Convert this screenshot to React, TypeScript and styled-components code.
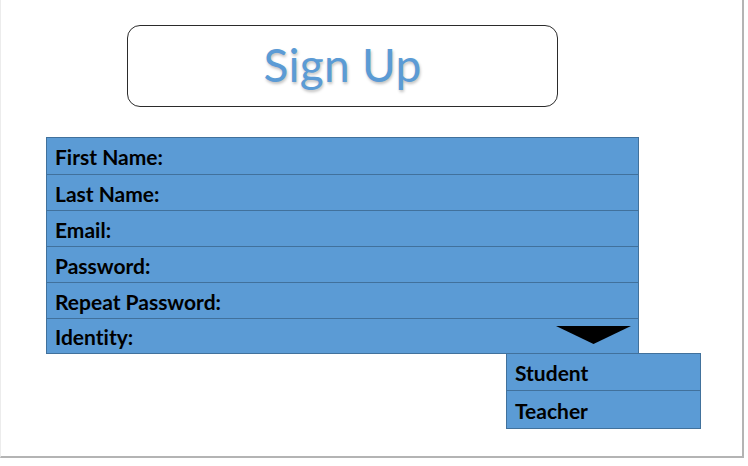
import React from "react";
import styled, { createGlobalStyle } from "styled-components";

const Global = createGlobalStyle`
  html, body { margin: 0; padding: 0; background: #ffffff; }
  body { font-family: Lato, "Open Sans", sans-serif; font-variant-ligatures: none; }
`;

const Canvas = styled.div`
  box-sizing: border-box;
  width: 744px;
  height: 458px;
  border-right: 2px solid #b4b4b4;
  border-bottom: 2px solid #b4b4b4;
  border-left: 1px solid #ececec;
  display: flex;
  flex-direction: column;
  align-items: flex-start;
  padding-top: 25px;
`;

const TitleBox = styled.div`
  box-sizing: border-box;
  margin-left: 126px;
  width: 431px;
  height: 82px;
  border: 1px solid #2b2b2b;
  border-radius: 13px;
  display: flex;
  align-items: center;
  justify-content: center;
`;

const Title = styled.h1`
  margin: 0 0 4px 0;
  font-family: Lato, "Open Sans", sans-serif;
  font-weight: 400;
  font-size: 46px;
  color: #5b9bd5;
  text-shadow: 1px 2px 3px rgba(0, 0, 0, 0.25);
  letter-spacing: 0.3px;
`;

const Form = styled.div`
  position: relative;
  box-sizing: border-box;
  margin-left: 45px;
  margin-top: 30px;
  width: 593px;
  background: #5b9bd5;
  border: 1px solid #41719c;
  display: flex;
  flex-direction: column;
`;

const Row = styled.div<{ $first?: boolean; $h?: number }>`
  box-sizing: border-box;
  height: ${(p) => p.$h ?? 36}px;
  border-top: ${(p) => (p.$first ? "none" : "1px solid #41719c")};
  display: flex;
  align-items: center;
  justify-content: space-between;
  padding: 1px 8px 0 8px;
`;

const Label = styled.span`
  font-family: Lato, "Open Sans", sans-serif;
  font-weight: 700;
  font-size: 21px;
  font-variant-ligatures: none;
  color: #000;
`;

const Arrow = styled.svg`
  width: 75px;
  height: 18px;
  margin-right: -1px;
  margin-top: -3px;
`;

const Dropdown = styled.div`
  position: absolute;
  left: 459px;
  top: 100%;
  box-sizing: border-box;
  width: 195px;
  background: #5b9bd5;
  border: 1px solid #41719c;
  display: flex;
  flex-direction: column;
`;

const fields = ["First Name:", "Last Name:", "Email:", "Password:", "Repeat Password:"];

export default function App() {
  return (
    <>
      <Global />
      <Canvas>
        <TitleBox>
          <Title>Sign Up</Title>
        </TitleBox>
        <Form>
          {fields.map((f, i) => (
            <Row key={f} $first={i === 0} $h={36}>
              <Label>{f}</Label>
            </Row>
          ))}
          <Row $h={35}>
            <Label>Identity:</Label>
            <Arrow viewBox="0 0 75 18">
              <polygon points="0,0 75,0 37.5,18" fill="#000" />
            </Arrow>
          </Row>
          <Dropdown>
            <Row $first $h={36}>
              <Label>Student</Label>
            </Row>
            <Row $h={38}>
              <Label>Teacher</Label>
            </Row>
          </Dropdown>
        </Form>
      </Canvas>
    </>
  );
}
